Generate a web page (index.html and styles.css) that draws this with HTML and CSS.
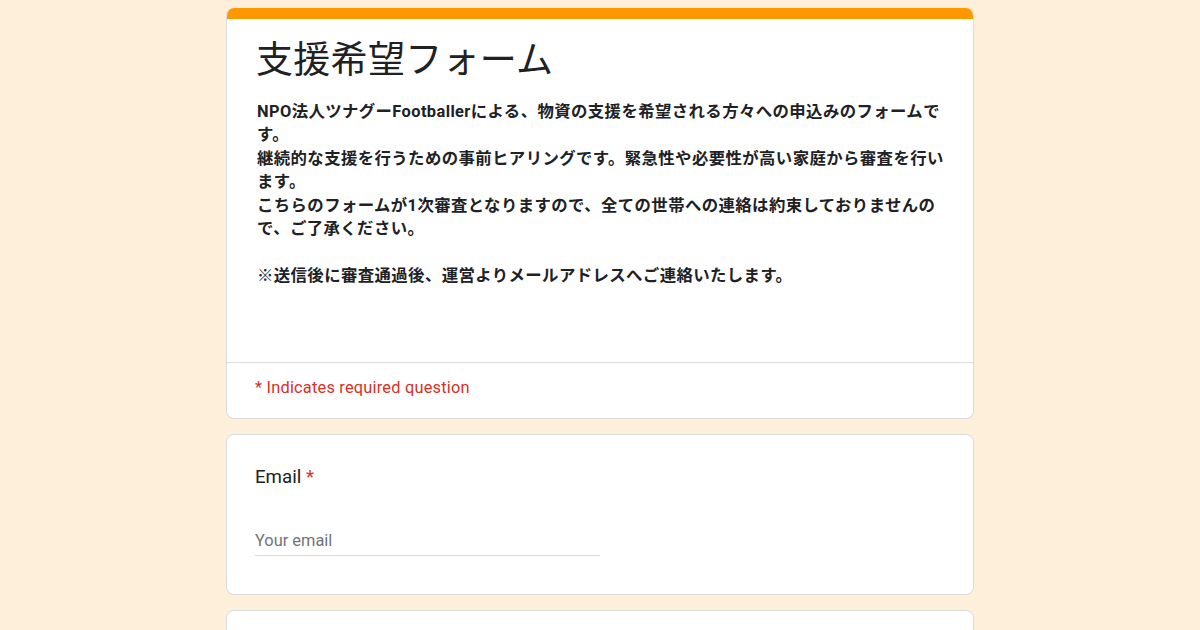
FILE: index.html
```html
<!DOCTYPE html>
<html lang="ja">
<head>
<meta charset="utf-8">
<title>支援希望フォーム</title>
<link rel="stylesheet" href="styles.css">
</head>
<body>
<main class="form">
  <section class="card header-card">
    <div class="band"></div>
    <div class="header-body">
      <h1 class="title">支援希望フォーム</h1>
      <div class="desc">NPO法人ツナグーFootballerによる、物資の支援を希望される方々への申込みのフォームです。<br>継続的な支援を行うための事前ヒアリングです。緊急性や必要性が高い家庭から審査を行います。<br>こちらのフォームが1次審査となりますので、全ての世帯への連絡は約束しておりませんので、ご了承ください。<br><br>※送信後に審査通過後、運営よりメールアドレスへご連絡いたします。</div>
    </div>
    <div class="required-note">* Indicates required question</div>
  </section>
  <section class="card question">
    <div class="q-label">Email <span class="star">*</span></div>
    <div class="input">Your email</div>
  </section>
  <section class="card question"></section>
</main>
</body>
</html>
```

FILE: styles.css
```css
html, body {
  margin: 0;
  padding: 0;
}
body {
  background: #feefdb;
  font-family: Roboto, "Noto Sans CJK JP", sans-serif;
  color: #202124;
}
.form {
  width: 748px;
  margin: 8px auto 0;
  display: flex;
  flex-direction: column;
  gap: 15px;
}
.card {
  background: #fff;
  border: 1px solid #dadce0;
  border-radius: 8px;
  box-sizing: border-box;
  overflow: hidden;
}
.header-card {
  border-top: none;
}
.band {
  height: 11px;
  background: #ff9800;
  margin: 0 -1px;
}
.header-body {
  padding: 16px 28px 75px 30px;
  border-bottom: 1px solid #dadce0;
}
.title {
  margin: 0 0 21px -1px;
  font-family: "Noto Sans CJK JP", sans-serif;
  font-weight: 400;
  font-size: 37px;
  line-height: 44px;
  letter-spacing: 0.3px;
  color: #202124;
}
.desc {
  font-family: Roboto, "Noto Sans CJK JP", sans-serif;
  font-weight: 700;
  font-size: 16.4px;
  line-height: 23.4px;
  letter-spacing: 0.4px;
  color: #202124;
}
.required-note {
  padding: 13px 28px 19px;
  font-size: 16.4px;
  line-height: 23px;
  letter-spacing: 0.2px;
  color: #d93025;
}
.question {
  padding: 28px 28px 38px;
}
.q-label {
  font-size: 18.7px;
  line-height: 28px;
  color: #202124;
}
.star {
  color: #d93025;
}
.input {
  margin-top: 36px;
  width: 345px;
  height: 29px;
  line-height: 28px;
  font-size: 16.4px;
  color: #70757a;
  border-bottom: 1px solid #dadce0;
  box-sizing: border-box;
}
.question:last-child {
  height: 120px;
}
```
